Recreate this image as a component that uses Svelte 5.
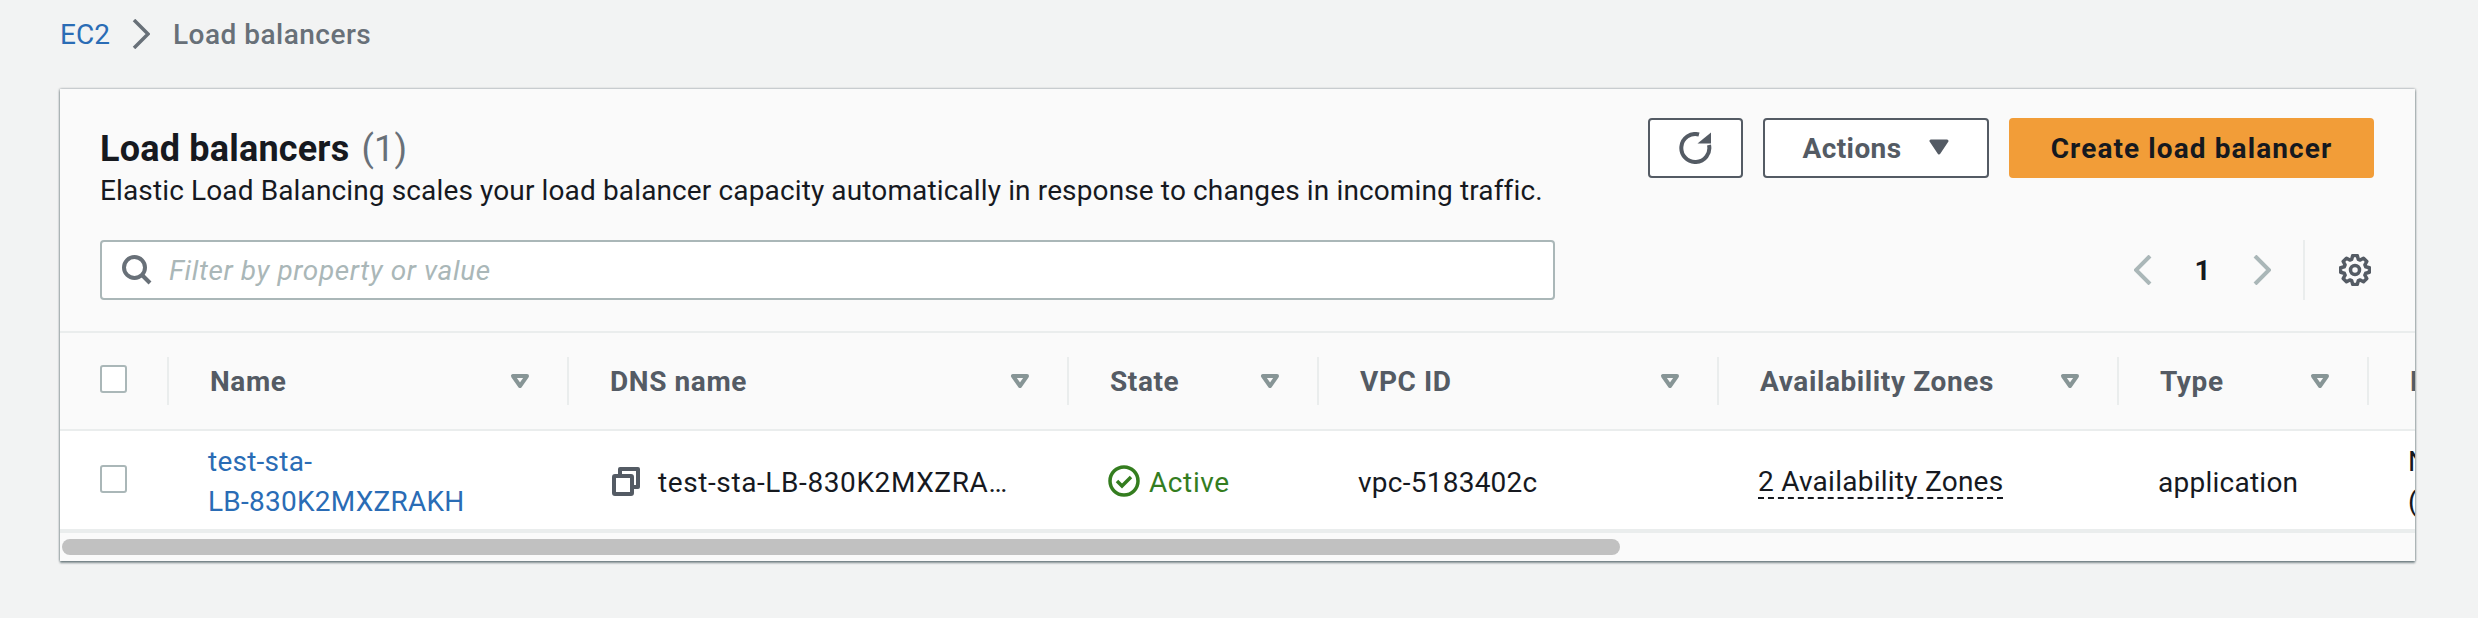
<script lang="ts">
  const columns = [
    { label: 'Name', width: 400 },
    { label: 'DNS name', width: 500 },
    { label: 'State', width: 250 },
    { label: 'VPC ID', width: 400 },
    { label: 'Availability Zones', width: 400 },
    { label: 'Type', width: 250 },
  ];

  // eight-tooth gear outline around (16,16)
  function gearPath(): string {
    const pts: string[] = [];
    for (let i = 0; i < 8; i++) {
      const a = (i * Math.PI) / 4 - Math.PI / 2;
      for (const [off, r] of [[-0.3, 11.2], [-0.16, 14.6], [0.16, 14.6], [0.3, 11.2]]) {
        pts.push(`${(16 + r * Math.cos(a + off)).toFixed(1)} ${(16 + r * Math.sin(a + off)).toFixed(1)}`);
      }
    }
    return 'M' + pts.join(' L') + ' Z';
  }
</script>

<div class="page">
  <nav class="crumbs">
    <a class="crumb-link" href="#ec2">EC2</a>
    <svg class="crumb-sep" viewBox="0 0 18 30" fill="none"><path d="M2 1 L16 15 L2 29" /></svg>
    <span class="crumb-current">Load balancers</span>
  </nav>

  <section class="card">
    <header class="card-head">
      <div class="head-top">
        <div class="head-text">
          <h1 class="title">Load balancers <span class="count">(1)</span></h1>
          <p class="desc">Elastic Load Balancing scales your load balancer capacity automatically in response to changes in incoming traffic.</p>
        </div>
        <div class="actions">
          <button class="btn refresh" aria-label="Refresh">
            <svg viewBox="0 0 33 32" fill="none" class="refresh-icon">
              <path d="M20 2.5 A14 14 0 1 0 30 13" />
              <path class="solid" d="M18.5 11.5 L32 11.5 L32 0.5 Z" />
            </svg>
          </button>
          <button class="btn actions-btn">
            <span>Actions</span>
            <svg viewBox="0 0 20 16" class="caret"><path d="M2 2 H18 L10 14 Z" /></svg>
          </button>
          <button class="btn primary">Create load balancer</button>
        </div>
      </div>
      <div class="head-tools">
        <label class="filter">
          <svg viewBox="0 0 30 30" fill="none" class="search-icon">
            <circle cx="12.5" cy="12.5" r="10.5" />
            <path d="M20 20 L28 28" />
          </svg>
          <input placeholder="Filter by property or value" />
        </label>
        <div class="pager">
          <svg viewBox="0 0 18 30" fill="none" class="pg"><path d="M16 1 L2 15 L16 29" /></svg>
          <span class="page-num">1</span>
          <svg viewBox="0 0 18 30" fill="none" class="pg"><path d="M2 1 L16 15 L2 29" /></svg>
          <span class="pager-div"></span>
          <svg viewBox="0 0 32 32" fill="none" class="gear">
            <circle cx="16" cy="16" r="4.5" />
            <path d={gearPath()} />
          </svg>
        </div>
      </div>
    </header>

    <div class="table">
      <div class="thead">
        <div class="th-check"><span class="check"></span></div>
        {#each columns as col}
          <div class="th" style="width: {col.width}px">
            <span>{col.label}</span>
            <svg viewBox="0 0 20 16" fill="none" class="sort"><path d="M3 3 H17 L10 13 Z" /></svg>
          </div>
        {/each}
        <div class="th-clip">D</div>
      </div>
      <div class="tr">
        <div class="td-check"><span class="check"></span></div>
        <div class="td td-name" style="width: 400px"><a href="#lb">test-sta-<br />LB-830K2MXZRAKH</a></div>
        <div class="td td-dns" style="width: 500px">
          <svg viewBox="0 0 28 29" fill="none" class="copy">
            <path d="M8 8 V2 H26 V20 H20" />
            <rect x="2" y="9" width="18" height="18" rx="1" />
          </svg>
          <span class="dns-text">test-sta-LB-830K2MXZRA…</span>
        </div>
        <div class="td td-state" style="width: 250px">
          <svg viewBox="0 0 32 32" fill="none" class="ok">
            <circle cx="16" cy="16" r="14" />
            <path d="M9 16 L14 21 L23 12" />
          </svg>
          <span>Active</span>
        </div>
        <div class="td" style="width: 400px">vpc-5183402c</div>
        <div class="td" style="width: 400px"><span class="dashed">2 Availability Zones</span></div>
        <div class="td" style="width: 250px">application</div>
        <div class="td td-clip">N<br />(</div>
      </div>
    </div>

    <div class="scroll">
      <div class="thumb"></div>
    </div>
  </section>
</div>

<style>
  :global(body) {
    margin: 0;
    background: #f2f3f3;
    font-family: Roboto, "Open Sans", sans-serif;
    color: #16191f;
  }

  .page {
    padding: 0 63px 0 60px;
    height: 618px;
    box-sizing: border-box;
    overflow: hidden;
  }

  .crumbs {
    display: flex;
    align-items: center;
    height: 68px;
    font-size: 28px;
  }

  a {
    color: #2a6cb5;
    text-decoration: none;
  }

  .crumb-sep {
    width: 18px;
    height: 30px;
    margin: 0 23px 0 22px;
    stroke: #687078;
    stroke-width: 3.5;
  }

  .crumb-current {
    color: #687078;
    font-weight: 500;
    letter-spacing: 0.5px;
  }

  .card {
    margin-top: 21px;
    background: #fff;
    box-shadow: 0 2px 2px rgba(0, 28, 36, 0.45), 0 -1px 2px rgba(0, 28, 36, 0.08), 1px 0 2px rgba(0, 28, 36, 0.2), -1px 0 2px rgba(0, 28, 36, 0.2);
    overflow: hidden;
  }

  .card-head {
    background: #fafafa;
    border-bottom: 2px solid #eaeded;
    padding: 29px 40px 0 40px;
    height: 244px;
    box-sizing: border-box;
  }

  .head-top {
    display: flex;
    justify-content: space-between;
  }

  .title {
    margin: 8px 0 0;
    font-size: 36px;
    line-height: 46px;
    font-weight: 700;
    letter-spacing: 0.2px;
  }

  .count {
    color: #687078;
    font-weight: 400;
    margin-left: 3px;
  }

  .desc {
    margin: 1px 0 0;
    font-size: 28px;
    line-height: 36px;
    letter-spacing: 0.13px;
    white-space: nowrap;
  }

  .actions {
    display: flex;
    gap: 20px;
    margin-right: 1px;
  }

  .btn {
    height: 60px;
    box-sizing: border-box;
    border: 2px solid #545b64;
    border-radius: 4px;
    background: #fff;
    color: #545b64;
    font: 700 28px Roboto, sans-serif;
    letter-spacing: 0.4px;
    padding: 0;
  }

  .refresh {
    width: 95px;
    display: flex;
    align-items: center;
    justify-content: center;
  }

  .refresh-icon {
    width: 33px;
    height: 32px;
    stroke: #545b64;
    stroke-width: 4;
  }

  .solid {
    fill: #545b64;
    stroke: none;
  }

  .actions-btn {
    width: 226px;
    display: flex;
    align-items: center;
    justify-content: center;
    gap: 28px;
  }

  .caret {
    width: 20px;
    height: 16px;
    fill: #545b64;
    stroke: #545b64;
    stroke-width: 3;
    stroke-linejoin: round;
    margin-top: -3px;
  }

  .primary {
    width: 365px;
    background: #f29d38;
    border-color: #f29d38;
    color: #16191f;
    letter-spacing: 1.1px;
  }

  .head-tools {
    display: flex;
    justify-content: space-between;
    align-items: center;
    margin-top: 31px;
  }

  .filter {
    width: 1455px;
    height: 60px;
    box-sizing: border-box;
    border: 2px solid #aab7b8;
    border-radius: 4px;
    background: #fff;
    display: flex;
    align-items: center;
    gap: 15px;
    padding-left: 20px;
  }

  .search-icon {
    width: 30px;
    height: 30px;
    stroke: #687078;
    stroke-width: 4;
    flex: none;
  }

  input {
    border: 0;
    outline: 0;
    flex: 1;
    background: transparent;
    font: italic 400 28px Roboto, sans-serif;
    letter-spacing: 0.6px;
  }

  input::placeholder {
    color: #aab7b8;
    opacity: 1;
  }

  .pager {
    display: flex;
    align-items: center;
    height: 60px;
    margin-right: 4px;
  }

  .pg {
    width: 18px;
    height: 30px;
    stroke: #aab7b8;
    stroke-width: 4;
  }

  .page-num {
    width: 101px;
    text-align: center;
    font-size: 28px;
    font-weight: 700;
  }

  .pager-div {
    width: 2px;
    height: 60px;
    background: #eaeded;
    margin: 0 34px 0 32px;
  }

  .gear {
    width: 32px;
    height: 32px;
    stroke: #545b64;
    stroke-width: 3.5;
    stroke-linejoin: round;
  }

  .table {
    overflow: hidden;
  }

  .thead {
    display: flex;
    align-items: center;
    height: 98px;
    background: #fafafa;
    border-bottom: 2px solid #eaeded;
    box-sizing: border-box;
    font-size: 28px;
    font-weight: 700;
    letter-spacing: 0.6px;
    color: #545b64;
  }

  .th-check,
  .td-check {
    width: 109px;
    flex: none;
    box-sizing: border-box;
    padding-left: 40px;
    display: flex;
  }

  .th-check {
    height: 48px;
    border-right: 2px solid #eaeded;
    align-items: center;
    padding-bottom: 4px;
  }

  .check {
    width: 27px;
    height: 28px;
    box-sizing: border-box;
    border: 2px solid #aab7b8;
    border-radius: 3px;
    background: #fff;
  }

  .th {
    flex: none;
    height: 48px;
    box-sizing: border-box;
    padding: 0 37px 0 41px;
    border-right: 2px solid #eaeded;
    display: flex;
    align-items: center;
    justify-content: space-between;
  }

  .sort {
    width: 20px;
    height: 16px;
    stroke: #879596;
    stroke-width: 4;
    stroke-linejoin: round;
  }

  .th-clip {
    flex: 1;
    padding-left: 41px;
  }

  .tr {
    display: flex;
    align-items: center;
    height: 102px;
    padding-top: 4px;
    background: #fff;
    border-bottom: 4px solid #eaeded;
    box-sizing: border-box;
    font-size: 28px;
    letter-spacing: 0.25px;
  }

  .td-check {
    height: 100%;
    align-items: center;
    padding-bottom: 6px;
  }

  .td {
    flex: none;
    box-sizing: border-box;
    padding-left: 39px;
    white-space: nowrap;
  }

  .td-name {
    line-height: 40px;
  }

  .td-dns,
  .td-state {
    display: flex;
    align-items: center;
  }

  .td-dns {
    padding-left: 43px;
    gap: 18px;
  }

  .dns-text {
    letter-spacing: 0.6px;
  }

  .copy {
    width: 28px;
    height: 29px;
    stroke: #545b64;
    stroke-width: 4;
    stroke-linejoin: round;
    flex: none;
    margin-top: -1px;
  }

  .td-state {
    color: #347d1f;
    letter-spacing: 0.6px;
    gap: 9px;
  }

  .ok {
    width: 32px;
    height: 32px;
    stroke: #347d1f;
    stroke-width: 3.5;
    flex: none;
    margin-top: -2px;
  }

  .dashed {
    display: inline-block;
    line-height: 30px;
    border-bottom: 2px dashed #16191f;
  }

  .td-clip {
    flex: 1;
    line-height: 40px;
  }

  .scroll {
    height: 28px;
    background: #fafafa;
    padding: 6px 0 0 2px;
    box-sizing: border-box;
  }

  .thumb {
    width: 1558px;
    height: 16px;
    border-radius: 8px;
    background: #c1c1c1;
  }
</style>
